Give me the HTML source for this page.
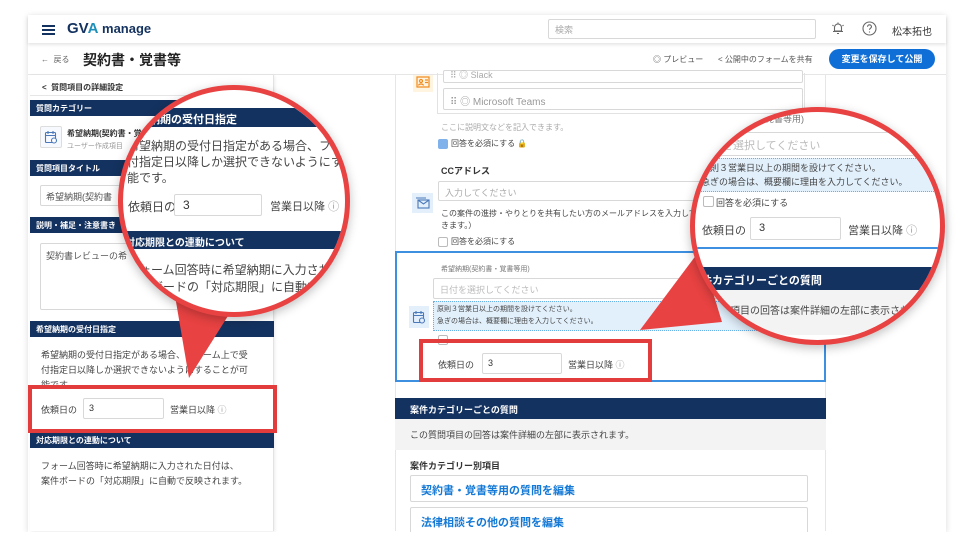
<!DOCTYPE html>
<html><head><meta charset="utf-8"><style>
*{box-sizing:border-box;margin:0;padding:0}
body{width:975px;height:550px;background:#fff;position:relative;overflow:hidden;font-family:"Liberation Sans","Noto Sans CJK JP",sans-serif;color:#333}
.a{position:absolute;white-space:nowrap}
.nav{position:absolute;background:#14325f;color:#fff;font-weight:bold}
.inp{position:absolute;border:1px solid #d8d8d8;background:#fff;border-radius:2px}
.g{color:#999}
.cb{position:absolute;width:10px;height:10px;border:1px solid #bbb;border-radius:2px;background:#fff}
.circle{position:absolute;border:5px solid #e84242;border-radius:50%;overflow:hidden;background:#fff;box-shadow:0 3px 10px rgba(0,0,0,.25)}
.inner{position:absolute;width:975px;height:550px}
.rbox{position:absolute;border:4px solid #e23c3c}
</style></head><body>
<div class="a" style="left:28px;top:15px;width:918px;height:517px;background:#fff;box-shadow:0 1px 6px rgba(0,0,0,.15)"></div>
<div class="a" style="left:28px;top:15px;width:918px;height:28px;background:#fff;box-shadow:0 2px 3px rgba(0,0,0,.1)"></div>
<div class="a" style="left:42px;top:25px;width:13px;height:2px;background:#14325f;box-shadow:0 4px 0 #14325f,0 8px 0 #14325f"></div>
<div class="a" style="left:67px;top:20px;font-size:15px;font-weight:bold;color:#14325f">GV<span style="color:#1d8fb8">A</span> <span style="font-size:13px">manage</span></div>
<div class="inp" style="left:548px;top:19px;width:268px;height:20px;font-size:9px;color:#aaa;padding:3px 6px">検索</div>
<svg class="a" style="left:831px;top:21px" width="14" height="14" viewBox="0 0 14 14" fill="none" stroke="#666" stroke-width="1.1"><path d="M3.5 10V6.5a3.5 3.5 0 017 0V10H3.5zM2 10.5h10M6 12.5h2M7 1.5v1.5M1.5 4l1 1M12.5 4l-1 1"/></svg>
<svg class="a" style="left:862px;top:21px" width="15" height="15" viewBox="0 0 15 15" fill="none" stroke="#666" stroke-width="1.1"><circle cx="7.5" cy="7.5" r="6.5"/><path d="M5.5 5.8a2 2 0 114 0c0 1.3-2 1.5-2 3M7.5 10.5v1"/></svg>
<div class="a" style="left:892px;top:23px;font-size:10px;color:#333">松本拓也</div>
<div class="a" style="left:28px;top:74px;width:918px;height:1px;background:#e6e6e6"></div>
<div class="a" style="left:41px;top:54px;font-size:8px;color:#666">←&nbsp; 戻る</div>
<div class="a" style="left:83px;top:50px;font-size:14px;font-weight:bold;color:#222">契約書・覚書等</div>
<div class="a" style="left:653px;top:54px;font-size:8px;color:#555">◎ プレビュー</div>
<div class="a" style="left:718px;top:54px;font-size:8px;color:#555">&lt; 公開中のフォームを共有</div>
<div class="a" style="left:829px;top:49px;width:106px;height:20px;background:#0f6fd6;border-radius:10px;color:#fff;font-size:9px;font-weight:bold;text-align:center;line-height:20px">変更を保存して公開</div>
<div class="a" style="left:30px;top:75px;width:244px;height:456px;background:#fff;border-right:1px solid #e3e3e3;box-shadow:1px 1px 3px rgba(0,0,0,.08)"></div>
<div class="a" style="left:42px;top:82px;font-size:8px;font-weight:bold;color:#333">&lt;&nbsp; 質問項目の詳細設定</div>
<div class="a" style="left:30px;top:95px;width:244px;height:1px;background:#e6e6e6"></div>
<div class="nav" style="left:30px;top:100px;width:244px;height:16px;font-size:8px;padding:3px 6px">質問カテゴリー</div>
<div class="a" style="left:40px;top:126px;width:22px;height:22px;border:1px solid #ddd;border-radius:2px;background:#f6f9fd"></div>
<svg class="a" style="left:44px;top:130px" width="14" height="14" viewBox="0 0 14 14" fill="none" stroke="#4a78b8" stroke-width="1.1"><rect x="1.5" y="2.5" width="10" height="10" rx="1"/><path d="M1.5 5.5h10M4 1v3M9 1v3"/><circle cx="10" cy="10.5" r="2.5" fill="#fff"/></svg>
<div class="a" style="left:67px;top:128px;font-size:8px;font-weight:bold">希望納期(契約書・覚</div>
<div class="a" style="left:67px;top:141px;font-size:7px;color:#999">ユーザー作成項目</div>
<div class="nav" style="left:30px;top:160px;width:244px;height:16px;font-size:8px;padding:3px 6px">質問項目タイトル</div>
<div class="inp" style="left:40px;top:185px;width:224px;height:21px;font-size:9px;color:#555;padding:4px 5px">希望納期(契約書</div>
<div class="nav" style="left:30px;top:217px;width:244px;height:16px;font-size:8px;padding:3px 6px">説明・補足・注意書き</div>
<div class="inp" style="left:40px;top:243px;width:224px;height:67px;font-size:9px;color:#555;padding:5px 5px">契約書レビューの希</div>
<div class="nav" style="left:30px;top:321px;width:244px;height:16px;font-size:8px;padding:3px 6px">希望納期の受付日指定</div>
<div class="a" style="left:41px;top:348px;font-size:9px;line-height:15px;color:#444">希望納期の受付日指定がある場合、フォーム上で受<br>付指定日以降しか選択できないようにすることが可<br>能です。</div>
<div class="a" style="left:41px;top:403px;font-size:9px;color:#444">依頼日の</div>
<div class="inp" style="left:83px;top:398px;width:81px;height:21px;font-size:9px;padding:4px 5px">3</div>
<div class="a" style="left:170px;top:403px;font-size:9px;color:#444">営業日以降 <span style="color:#999">ⓘ</span></div>
<div class="nav" style="left:30px;top:432px;width:244px;height:16px;font-size:8px;padding:3px 6px">対応期限との連動について</div>
<div class="a" style="left:41px;top:459px;font-size:9px;line-height:15px;color:#444">フォーム回答時に希望納期に入力された日付は、<br>案件ボードの「対応期限」に自動で反映されます。</div>
<div class="a" style="left:395px;top:75px;width:1px;height:456px;background:#e6e6e6"></div>
<div class="a" style="left:825px;top:75px;width:1px;height:456px;background:#e6e6e6"></div>
<div class="a" style="left:413px;top:75px;width:20px;height:17px;background:#fff4e0"></div>
<svg class="a" style="left:416px;top:76px" width="14" height="12" viewBox="0 0 14 12" fill="none" stroke="#f08a1c" stroke-width="1.2"><rect x="1" y="1" width="12" height="10"/><circle cx="5" cy="5" r="1.5"/><path d="M2.5 9.5c.5-2 4.5-2 5 0M9 4h3M9 6.5h3"/></svg>
<div class="a" style="left:437px;top:73px;width:368px;height:41px;border:1px solid #e2e2e2;border-top:none"></div>
<div class="inp" style="left:443px;top:70px;width:360px;height:13px;font-size:9px;color:#aaa;padding:0 6px;line-height:8px">⠿ ◎ Slack</div>
<div class="inp" style="left:443px;top:88px;width:360px;height:22px;font-size:10px;color:#999;padding:4px 6px">⠿ ◎ Microsoft Teams</div>
<div class="a" style="left:441px;top:122px;font-size:8px;color:#aaa">ここに説明文などを記入できます。</div>
<div class="cb" style="left:438px;top:139px;background:#7fb2ea;border-color:#7fb2ea"></div>
<div class="a" style="left:451px;top:138px;font-size:8px;color:#444">回答を必須にする 🔒</div>
<div class="a" style="left:441px;top:164px;font-size:9px;font-weight:bold;color:#333">CCアドレス</div>
<div class="inp" style="left:438px;top:181px;width:367px;height:20px;font-size:9px;color:#aaa;padding:4px 6px">入力してください</div>
<div class="a" style="left:412px;top:193px;width:21px;height:20px;background:#e3effb"></div>
<svg class="a" style="left:415px;top:197px" width="15" height="12" viewBox="0 0 15 12" fill="none" stroke="#4a78b8" stroke-width="1.1"><rect x="3" y="3" width="11" height="8"/><path d="M3 3l5.5 4L14 3M1 1h10"/></svg>
<div class="a" style="left:441px;top:208px;font-size:8px;line-height:12px;color:#444">この案件の進捗・やりとりを共有したい方のメールアドレスを入力して<br>きます。）</div>
<div class="cb" style="left:438px;top:237px"></div>
<div class="a" style="left:451px;top:236px;font-size:8px;color:#444">回答を必須にする</div>
<div class="a" style="left:395px;top:251px;width:431px;height:131px;border:2px solid #3d8fe0;background:#fff"></div>
<div class="a" style="left:441px;top:264px;font-size:7px;color:#777">希望納期(契約書・覚書等用)</div>
<div class="inp" style="left:433px;top:278px;width:372px;height:21px;font-size:9px;color:#bbb;padding:4px 6px">日付を選択してください</div>
<div class="a" style="left:433px;top:301px;width:372px;height:30px;background:#e2f0fc;border:1px dotted #6aaee8;font-size:7px;line-height:12px;color:#444;padding:2px 3px">原則３営業日以上の期間を設けてください。<br>急ぎの場合は、概要欄に理由を入力してください。</div>
<div class="a" style="left:409px;top:306px;width:20px;height:22px;background:#e3effb"></div>
<svg class="a" style="left:412px;top:310px" width="14" height="14" viewBox="0 0 14 14" fill="none" stroke="#4a78b8" stroke-width="1.1"><rect x="1.5" y="2.5" width="10" height="10" rx="1"/><path d="M1.5 5.5h10M4 1v3M9 1v3"/><circle cx="10" cy="10.5" r="2.5" fill="#e3effb"/></svg>
<div class="cb" style="left:438px;top:335px"></div>
<div class="a" style="left:438px;top:358px;font-size:9px;color:#444">依頼日の</div>
<div class="inp" style="left:482px;top:353px;width:80px;height:21px;font-size:9px;padding:4px 5px">3</div>
<div class="a" style="left:568px;top:358px;font-size:9px;color:#444">営業日以降 <span style="color:#999">ⓘ</span></div>
<div class="nav" style="left:395px;top:398px;width:431px;height:21px;font-size:9px;padding:5px 15px">案件カテゴリーごとの質問</div>
<div class="a" style="left:395px;top:419px;width:431px;height:31px;background:#f3f3f3;font-size:9px;color:#444;padding:9px 15px">この質問項目の回答は案件詳細の左部に表示されます。</div>
<div class="a" style="left:410px;top:459px;font-size:9px;font-weight:bold;color:#333">案件カテゴリー別項目</div>
<div class="inp" style="left:410px;top:475px;width:398px;height:27px;font-size:11px;font-weight:bold;color:#1479d6;padding:6px 10px">契約書・覚書等用の質問を編集</div>
<div class="inp" style="left:410px;top:507px;width:398px;height:27px;font-size:11px;font-weight:bold;color:#1479d6;padding:6px 10px">法律相談その他の質問を編集</div>
<div class="a" style="left:0;top:532px;width:975px;height:18px;background:#fff"></div>
<div class="rbox" style="left:28px;top:385px;width:249px;height:48px"></div>
<div class="rbox" style="left:419px;top:339px;width:233px;height:43px"></div>
<svg class="a" style="left:0;top:0" width="975" height="550"><polygon points="174,290 238,300 189,378" fill="#e84242"/><polygon points="700,250 722,322 640,330" fill="#e84242"/></svg>
<div class="circle" style="left:118px;top:85px;width:232px;height:232px">
<div class="inner" style="left:-123px;top:-90px">
<div class="nav" style="left:100px;top:108px;width:260px;height:19px;font-size:11px;padding:3px 0 0 27px">希望納期の受付日指定</div>
<div class="a" style="left:127px;top:138px;font-size:12px;line-height:16px;color:#444">希望納期の受付日指定がある場合、フォーム上で受<br>付指定日以降しか選択できないようにすることが可<br>能です。</div>
<div class="a" style="left:128px;top:198px;font-size:12px;color:#444">依頼日の</div>
<div class="inp" style="left:174px;top:194px;width:88px;height:22px;font-size:12px;padding:3px 8px">3</div>
<div class="a" style="left:270px;top:198px;font-size:11px;color:#444">営業日以降 <span style="color:#999">ⓘ</span></div>
<div class="nav" style="left:100px;top:231px;width:260px;height:18px;font-size:10px;padding:3px 0 0 25px">対応期限との連動について</div>
<div class="a" style="left:127px;top:262px;font-size:12px;line-height:17px;color:#444">フォーム回答時に希望納期に入力された日付は、<br>案件ボードの「対応期限」に自動で反映されます。</div>
</div></div>
<div class="circle" style="left:690px;top:107px;width:255px;height:238px">
<div class="inner" style="left:-695px;top:-112px">
<div class="a" style="left:690px;top:112px;font-size:9px;color:#777">希望納期(契約書・覚書等用)</div>
<div class="inp" style="left:690px;top:132px;width:260px;height:24px;font-size:11px;color:#bbb;padding:4px 0 0 9px">日付を選択してください</div>
<div class="a" style="left:690px;top:158px;width:260px;height:34px;background:#e2f0fc;border:1px dotted #6aaee8;font-size:9px;line-height:14px;color:#444;padding:2px 0 0 10px">原則３営業日以上の期間を設けてください。<br>急ぎの場合は、概要欄に理由を入力してください。</div>
<div class="cb" style="left:703px;top:196px;width:11px;height:11px"></div>
<div class="a" style="left:716px;top:196px;font-size:9px;color:#444">回答を必須にする</div>
<div class="a" style="left:702px;top:222px;font-size:11px;color:#444">依頼日の</div>
<div class="inp" style="left:750px;top:217px;width:91px;height:23px;font-size:11px;padding:4px 8px">3</div>
<div class="a" style="left:848px;top:222px;font-size:11px;color:#444">営業日以降 <span style="color:#999">ⓘ</span></div>
<div class="a" style="left:690px;top:247px;width:260px;height:2px;background:#3d8fe0"></div>
<div class="nav" style="left:690px;top:267px;width:260px;height:23px;font-size:11px;padding:5px 0 0 0">案件カテゴリーごとの質問</div>
<div class="a" style="left:690px;top:290px;width:260px;height:45px;background:#f3f3f3;font-size:10px;color:#444;padding:12px 0 0 0">この質問項目の回答は案件詳細の左部に表示されます。</div>
</div></div>
</body></html>
